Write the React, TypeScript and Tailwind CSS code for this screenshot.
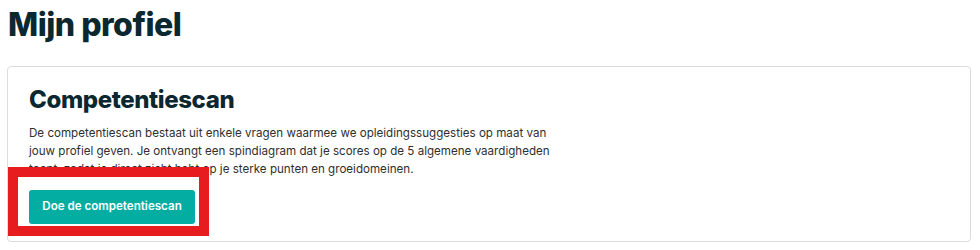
import React from "react";

export default function App() {
  return (
    <div className="w-[980px] h-[250px] bg-white overflow-hidden relative" style={{ fontFamily: "Inter, 'Liberation Sans', sans-serif" }}>
      <h1 className="ml-[8px] pt-[7px] text-[32px] leading-[36px] font-extrabold text-[#0b2830] tracking-[-0.5px]">Mijn profiel</h1>
      <div className="ml-[7px] mr-[9px] mt-[23px] h-[176px] border border-[#dcdcdc] rounded-[4px] pl-[21px] pt-[18px]">
        <h2 className="text-[24px] leading-[30px] font-extrabold text-[#0b2830] tracking-[-0.4px]">Competentiescan</h2>
        <p className="mt-[9px] w-[530px] text-[11.6px] leading-[18px] text-[#2f2f2f]">
          De competentiescan bestaat uit enkele vragen waarmee we opleidingssuggesties op maat van jouw profiel geven. Je ontvangt een spindiagram dat je scores op de 5 algemene vaardigheden toont, zodat je direct zicht hebt op je sterke punten en groeidomeinen.
        </p>
        <button className="mt-[12px] w-[166px] h-[34px] rounded-[3px] bg-[#04ada2] text-white text-[11.6px] font-semibold">Doe de competentiescan</button>
      </div>
      <div className="absolute left-[8px] top-[167px] w-[201px] h-[69px] border-[10px] border-[#e71c1f]" />
    </div>
  );
}
